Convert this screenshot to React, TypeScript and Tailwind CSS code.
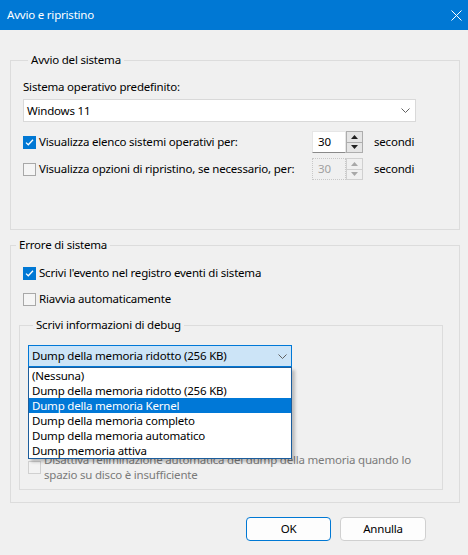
import { ReactNode } from "react";

function Check({ checked, disabled }: { checked?: boolean; disabled?: boolean }) {
  if (checked) {
    return (
      <span className="w-[13px] h-[13px] shrink-0 bg-[#0078d4] flex items-center justify-center">
        <svg width="11" height="11" viewBox="0 0 11 11">
          <path d="M2 5.6 L4.3 7.8 L9 2.8" fill="none" stroke="#fff" strokeWidth="1.3" />
        </svg>
      </span>
    );
  }
  return (
    <span
      className={
        "w-[13px] h-[13px] shrink-0 border " +
        (disabled ? "border-[#d0d0d0] bg-[#f3f3f3]" : "border-[#a8a8a8] bg-[#f5f5f5]")
      }
    />
  );
}

function Chevron() {
  return (
    <svg width="9" height="5" viewBox="0 0 9 5">
      <path d="M0.5 0.5 L4.5 4.5 L8.5 0.5" fill="none" stroke="#606060" strokeWidth="1" />
    </svg>
  );
}

function Arrow({ up, disabled }: { up?: boolean; disabled?: boolean }) {
  return (
    <svg width="7" height="4" viewBox="0 0 7 4">
      <path
        d={up ? "M0 4 L3.5 0 L7 4 Z" : "M0 0 L3.5 4 L7 0 Z"}
        fill={disabled ? "#a8a8a8" : "#202020"}
      />
    </svg>
  );
}

function Spin({ disabled }: { disabled?: boolean }) {
  return (
    <div className="flex h-[22px]">
      <div
        className={
          "w-[34px] h-full flex items-center pl-[5px] " +
          (disabled
            ? "border border-dotted border-[#c8c8c8] text-[#a0a0a0] bg-[#f0f0f0]"
            : "bg-white border border-[#e6e6e6] border-b-[#8a8a8a]")
        }
      >
        30
      </div>
      <div className="w-[17px] h-full flex flex-col">
        <div
          className={
            "flex-1 flex items-center justify-center border " +
            (disabled ? "border-[#d0d0d0] bg-[#f0f0f0]" : "border-[#adadad] bg-[#e5e5e5]")
          }
        >
          <Arrow up disabled={disabled} />
        </div>
        <div
          className={
            "flex-1 flex items-center justify-center border border-t-0 " +
            (disabled ? "border-[#d0d0d0] bg-[#f0f0f0]" : "border-[#adadad] bg-[#e5e5e5]")
          }
        >
          <Arrow disabled={disabled} />
        </div>
      </div>
    </div>
  );
}

function Group({ title, className, children }: { title: string; className: string; children: ReactNode }) {
  return (
    <fieldset className={"border border-[#dcdcdc] " + className}>
      <legend className="ml-[5px] px-[3px] leading-[16px]">{title}</legend>
      {children}
    </fieldset>
  );
}

const dumps = [
  "(Nessuna)",
  "Dump della memoria ridotto (256 KB)",
  "Dump della memoria Kernel",
  "Dump della memoria completo",
  "Dump della memoria automatico",
  "Dump memoria attiva",
];

export default function App() {
  return (
    <div className="w-[468px] h-[555px] bg-[#f0f0f0] text-[11.5px] tracking-[-0.2px] leading-[16px] text-black font-['Segoe_UI','Noto_Sans',sans-serif] overflow-hidden">
      {/* title bar */}
      <div className="h-[30px] bg-[#0078d4] flex items-center justify-between pl-[7px] pr-[6px] text-white">
        <span>Avvio e ripristino</span>
        <svg width="11" height="11" viewBox="0 0 11 11">
          <path d="M0.5 0.5 L10.5 10.5 M10.5 0.5 L0.5 10.5" stroke="#fff" strokeWidth="1" />
        </svg>
      </div>

      <div className="pl-[10px] pr-[8px] pt-[22px]">
        <Group title="Avvio del sistema" className="h-[178px] pl-[12px] pt-[11px]">
          <div>Sistema operativo predefinito:</div>
          <div className="mt-[4px] w-[393px] h-[23px] bg-white border border-[#d9d9d9] flex items-center justify-between pl-[3px] pr-[5px]">
            <span>Windows 11</span>
            <Chevron />
          </div>
          <div className="mt-[9px] flex items-center">
            <div className="w-[289px] flex items-center gap-[3px]">
              <Check checked />
              <span>Visualizza elenco sistemi operativi per:</span>
            </div>
            <Spin />
            <span className="ml-[11px]">secondi</span>
          </div>
          <div className="mt-[5px] flex items-center">
            <div className="w-[289px] flex items-center gap-[3px]">
              <Check />
              <span className="whitespace-nowrap">Visualizza opzioni di ripristino, se necessario, per:</span>
            </div>
            <Spin disabled />
            <span className="ml-[11px]">secondi</span>
          </div>
        </Group>

        <Group title="Errore di sistema" className="mt-[7px] h-[266px] pt-[12px]">
          <div className="pl-[12px] flex items-center gap-[3px]">
            <Check checked />
            <span>Scrivi l'evento nel registro eventi di sistema</span>
          </div>
          <div className="mt-[10px] pl-[12px] flex items-center gap-[3px]">
            <Check />
            <span>Riavvia automaticamente</span>
          </div>

          <Group title="Scrivi informazioni di debug" className="mt-[10px] ml-[8px] mr-[16px] h-[173px] pl-[8px] pt-[12px]">
            <div className="relative w-[264px]">
              <div className="h-[22px] bg-[#cce4f7] border border-[#0078d7] flex items-center justify-between pl-[3px] pr-[4px]">
                <span>Dump della memoria ridotto (256 KB)</span>
                <Chevron />
              </div>
              {/* open dropdown list */}
              <div className="absolute left-0 top-[22px] z-10 w-[264px] bg-white border border-[#1c5d9c] shadow-[3px_3px_3px_rgba(0,0,0,0.22)] leading-[15px]">
                {dumps.map((d, i) => (
                  <div key={d} className={"h-[15px] pl-[3px] " + (i === 2 ? "bg-[#0078d7] text-white" : "")}>
                    {d}
                  </div>
                ))}
              </div>
            </div>

            {/* space taken by the controls hidden under the open list */}
            <div className="h-[85px]" />

            <div className="flex items-center gap-[3px] text-[#7a7a7a] leading-[15px]">
              <Check disabled />
              <span className="w-[385px]">
                Disattiva l'eliminazione automatica del dump della memoria quando lo spazio su disco è insufficiente
              </span>
            </div>
          </Group>
        </Group>

        <div className="mt-[14px] pr-[34px] flex justify-end gap-[9px]">
          <button className="w-[85px] h-[24px] rounded-[4px] bg-[#fdfdfd] border border-[#0078d4]">OK</button>
          <button className="w-[86px] h-[24px] rounded-[4px] bg-[#fdfdfd] border border-[#d0d0d0]">Annulla</button>
        </div>
      </div>
    </div>
  );
}
